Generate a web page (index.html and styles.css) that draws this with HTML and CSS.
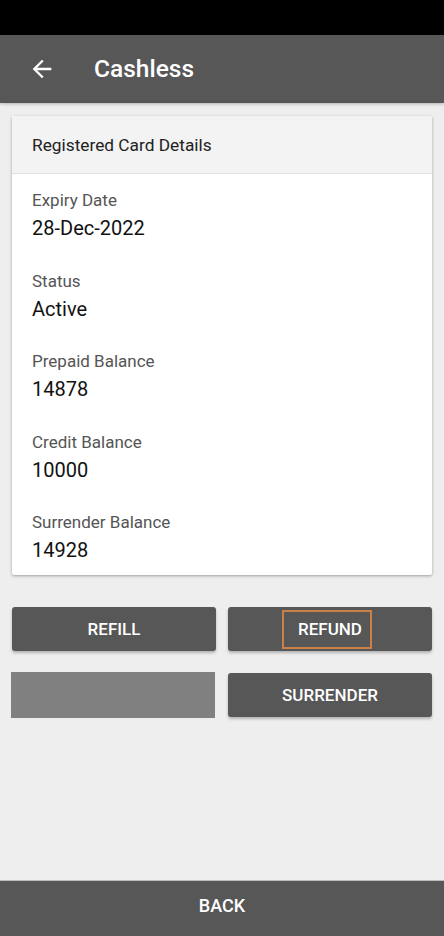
FILE: index.html
```html
<!DOCTYPE html>
<html>
<head>
<meta charset="utf-8">
<link rel="stylesheet" href="styles.css">
</head>
<body>
<div class="screen">
  <div class="statusbar"></div>
  <header class="toolbar">
    <svg class="back-icon" width="28" height="28" viewBox="0 0 24 24"><path d="M20 11H7.83l5.59-5.59L12 4l-8 8 8 8 1.41-1.41L7.83 13H20v-2z" fill="#ffffff"/></svg>
    <h1 class="title">Cashless</h1>
  </header>
  <main class="content">
    <section class="card">
      <div class="card-header">Registered Card Details</div>
      <div class="card-body">
        <div class="row"><div class="label">Expiry Date</div><div class="value">28-Dec-2022</div></div>
        <div class="row"><div class="label">Status</div><div class="value">Active</div></div>
        <div class="row"><div class="label">Prepaid Balance</div><div class="value">14878</div></div>
        <div class="row"><div class="label">Credit Balance</div><div class="value">10000</div></div>
        <div class="row"><div class="label">Surrender Balance</div><div class="value">14928</div></div>
      </div>
    </section>
    <div class="actions">
      <button class="btn">REFILL</button>
      <button class="btn"><span class="focus"><span class="focus-text">REFUND</span></span></button>
      <div class="blank"></div>
      <button class="btn">SURRENDER</button>
    </div>
  </main>
  <footer class="bottombar">BACK</footer>
</div>
</body>
</html>
```
FILE: styles.css
```css
* { box-sizing: border-box; }
html, body { margin: 0; padding: 0; }
body {
  background: #eeeeee;
  font-family: Roboto, "Noto Sans", "Liberation Sans", sans-serif;
}
.screen {
  display: flex;
  flex-direction: column;
  height: 936px;
}
.statusbar {
  height: 35px;
  background: #000000;
}
.toolbar {
  height: 68px;
  background: #575757;
  display: flex;
  align-items: center;
  padding-left: 28px;
  box-shadow: 0 1px 3px rgba(0,0,0,0.25);
  position: relative;
  z-index: 1;
}
.back-icon { display: block; }
.title {
  margin: 0 0 0 38px;
  color: #ffffff;
  font-size: 24.5px;
  font-weight: 500;
  line-height: 30px;
}
.content {
  padding: 13px 12px 0;
}
.card {
  background: #ffffff;
  border-radius: 2px;
  box-shadow: 0 1px 3px rgba(0,0,0,0.35);
}
.card-header {
  height: 58px;
  background: #f3f3f3;
  border-bottom: 1px solid #e2e2e2;
  padding-left: 20px;
  display: flex;
  align-items: center;
  font-size: 17.3px;
  color: #222222;
  border-radius: 2px 2px 0 0;
}
.card-body {
  padding: 16px 20px 11px;
  display: flex;
  flex-direction: column;
  gap: 28.5px;
}
.label {
  font-size: 17px;
  line-height: 21px;
  color: #555555;
}
.value {
  margin-top: 3px;
  font-size: 20px;
  line-height: 28px;
  color: #111111;
}
.actions {
  margin-top: 32px;
  display: grid;
  grid-template-columns: 1fr 1fr;
  column-gap: 12px;
  row-gap: 22px;
}
.btn {
  height: 44px;
  border: none;
  border-radius: 3px;
  background: #575757;
  color: #ffffff;
  font-family: Roboto, "Noto Sans", "Liberation Sans", sans-serif;
  font-size: 17px;
  font-weight: 500;
  box-shadow: 0 2px 3px rgba(0,0,0,0.25);
  display: flex;
  align-items: center;
  justify-content: center;
  padding: 0;
}
.focus {
  display: flex;
  align-items: center;
  justify-content: center;
  width: 90px;
  height: 39px;
  margin-right: 6px;
  border: 2px solid #c98049;
}
.focus-text {
  margin-left: 6px;
}
.blank {
  height: 46px;
  margin: -1px 1px 0 -1px;
  background: #808080;
}
.bottombar {
  margin-top: auto;
  height: 56px;
  padding-bottom: 6px;
  background: #575757;
  border-top: 1px solid #bdbdbd;
  color: #ffffff;
  font-size: 18px;
  font-weight: 500;
  display: flex;
  align-items: center;
  justify-content: center;
}
```
